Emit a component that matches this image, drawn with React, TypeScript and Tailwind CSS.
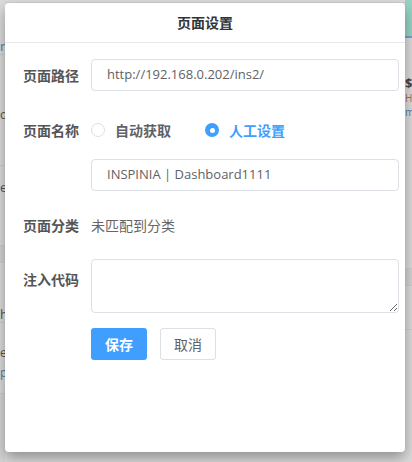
import * as React from "react";

const FONT = "font-['Open_Sans','Noto_Sans_CJK_SC',sans-serif]";

const Label: React.FC<{ children: React.ReactNode; className?: string }> = ({
	children,
	className = "",
}) => (
	<div
		className={`w-[68px] shrink-0 text-[14px] font-bold text-[#555] ${className}`}
	>
		{children}
	</div>
);

const Radio: React.FC<{ checked?: boolean; label: string }> = ({
	checked,
	label,
}) => (
	<label className="flex items-center">
		{checked ? (
			<span className="flex h-[14px] w-[14px] items-center justify-center rounded-full bg-[#409eff]">
				<span className="h-[5px] w-[5px] rounded-full bg-white" />
			</span>
		) : (
			<span className="h-[14px] w-[14px] rounded-full border border-[#dcdfe6] bg-white" />
		)}
		<span
			className={`ml-[10px] text-[14px] font-bold ${checked ? "text-[#409eff]" : "text-[#606266]"}`}
		>
			{label}
		</span>
	</label>
);

// dimmed page behind the dialog, only the edges show
const Backdrop: React.FC = () => (
	<div className="flex h-full w-full bg-[#dcdcdc] text-[13px] leading-[14px]">
		<div className="flex w-[5px] flex-col overflow-hidden">
			<div className="h-[38px]" />
			<div className="flex h-[16px] items-center text-[#4a7fae]">r</div>
			<div className="h-[54px] border-t border-[#cfcfcf]" />
			<div className="h-[10px] text-[12px] text-[#555]">o</div>
			<div className="h-[47px]" />
			<div className="h-[80px] border-t border-[#cfcfcf] pt-[14px] text-[#555]">
				e
			</div>
			<div className="h-[18px] border-y border-[#cfcfcf] bg-[#d4d4d4]" />
			<div className="h-[60px] border-b border-[#cfcfcf] pt-[44px] text-[#555]">
				h
			</div>
			<div className="flex h-[70px] flex-col pt-[20px] text-[12px] leading-[20px]">
				<span className="text-[#555]">ev</span>
				<span className="text-[#4a7fae]">p</span>
			</div>
			<div className="flex-1 border-t border-[#cfcfcf] bg-[#d6d6d6]" />
		</div>
		<div className="flex flex-1 flex-col">
			<div className="h-[3px] border-b border-[#cfcfcf]" />
		</div>
		<div className="flex w-[7px] flex-col overflow-hidden">
			<div className="h-[38px] border-b-2 border-[#6fa6cf] bg-[#97d3c4]" />
			<div className="h-[38px]" />
			<div className="h-[16px] font-bold text-[#444]">$</div>
			<div className="flex flex-col gap-[2px] text-[10px] leading-[12px]">
				<span className="text-[#b06a55]">Ha</span>
				<span className="text-[#4a7fae]">m</span>
			</div>
			<div className="mt-[150px] h-[18px] border-y border-[#cfcfcf] bg-[#d4d4d4]" />
			<div className="h-[44px] border-b border-[#cfcfcf]" />
			<div className="flex-1" />
		</div>
	</div>
);

const App: React.FC = () => {
	return (
		<div className={`relative h-[462px] w-[412px] overflow-hidden ${FONT}`}>
			<Backdrop />
			<div className="absolute left-[5px] top-[3px] flex h-[449px] w-[400px] flex-col rounded-[4px] bg-white shadow-[0_6px_14px_rgba(0,0,0,0.35)]">
				<div className="flex h-[40px] shrink-0 items-center justify-center border-b border-[#e8e8e8] text-[14px] font-bold text-[#333]">
					页面设置
				</div>
				<div className="flex flex-col pl-[18px] pr-[6px] pt-[16px]">
					<div className="flex h-[32px] items-center">
						<Label>页面路径</Label>
						<div className="flex h-[32px] flex-1 items-center rounded-[4px] border border-[#dcdfe6] px-[15px] text-[13px] text-[#606266]">
							http://192.168.0.202/ins2/
						</div>
					</div>
					<div className="mt-[23px] flex h-[32px] items-center">
						<Label>页面名称</Label>
						<div className="flex items-center gap-[34px]">
							<Radio label="自动获取" />
							<Radio checked label="人工设置" />
						</div>
					</div>
					<div className="mt-[13px] flex h-[32px] items-center">
						<div className="w-[68px] shrink-0" />
						<div className="flex h-[32px] flex-1 items-center rounded-[4px] border border-[#dcdfe6] px-[15px] text-[13px] text-[#606266]">
							INSPINIA | Dashboard1111
						</div>
					</div>
					<div className="mt-[18px] flex h-[32px] items-center">
						<Label>页面分类</Label>
						<span className="text-[14px] text-[#666]">未匹配到分类</span>
					</div>
					<div className="mt-[18px] flex items-start">
						<Label className="pt-[11px] leading-[20px]">注入代码</Label>
						<textarea className="h-[54px] flex-1 resize-y rounded-[4px] border border-[#dcdfe6] px-[15px] py-[5px] text-[13px] text-[#606266] outline-none" />
					</div>
					<div className="mt-[15px] flex items-center gap-[13px] pl-[68px]">
						<button className="h-[32px] w-[56px] rounded-[3px] bg-[#409eff] text-[14px] font-bold text-white">
							保存
						</button>
						<button className="h-[32px] w-[56px] rounded-[3px] border border-[#dcdfe6] bg-white text-[14px] text-[#606266]">
							取消
						</button>
					</div>
				</div>
			</div>
		</div>
	);
};

export default App;
